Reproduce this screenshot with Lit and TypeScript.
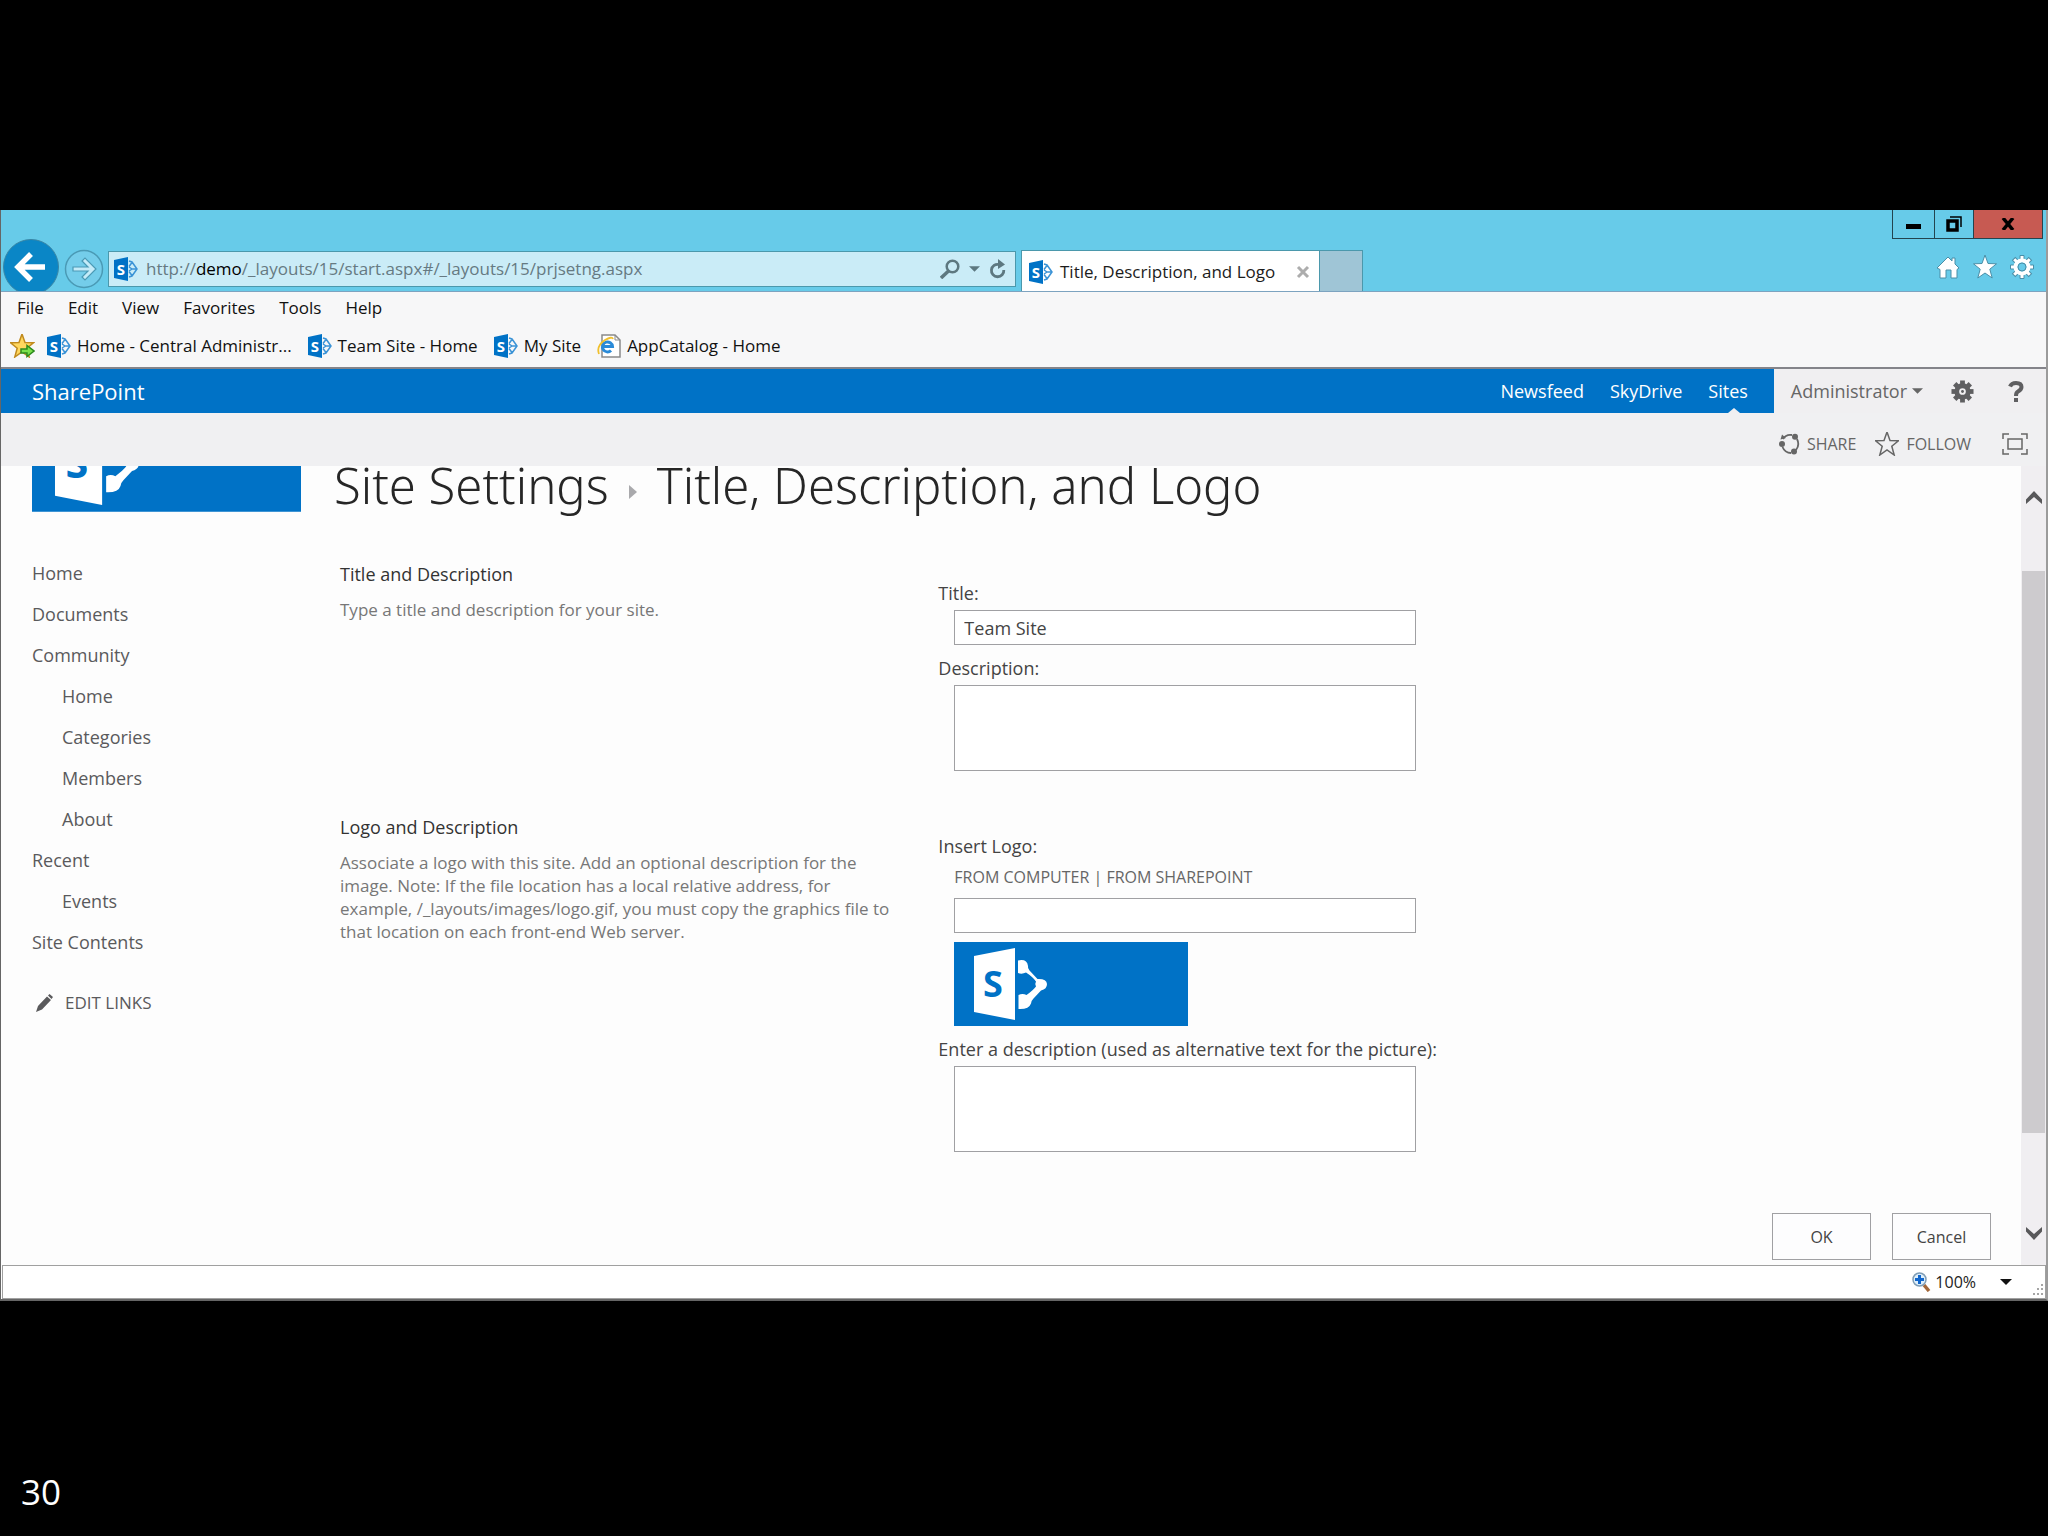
import { LitElement, html, css, svg } from "lit";
import { customElement, state } from "lit/decorators.js";

const siteIcon = html`<svg class="site-icon" viewBox="0 0 24 24" width="24" height="24" aria-hidden="true">
  <path d="M0 3 14 0v24L0 21z" fill="#0072c6" />
  <path d="M15 4l3 1 5 7-5 7-3 1M15 9.500l3-4M15 14.500l3 4M15 10l3 2-3 2M18 12h5" fill="none" stroke="#3b93d6" stroke-width="1.500" />
  <text x="7" y="17.500" text-anchor="middle" class="icon-letter small">S</text>
</svg>`;

const bannerArt = html`<svg class="banner-art" viewBox="0 0 234 84" aria-hidden="true">
  <path d="M0 0h234v84H0z" fill="#0072c6" />
  <path d="M20 14 61 6v72L20 70z" fill="#fff" />
  <path d="M64 18.500q9-2 10 5.500-.5 2.500 1.500 4.500l8 8.500q9-.5 9.500 5 0 5-6 6.500l-7.500 8q-2.500 2.500-2.500 5-2 6-12.500 5.500V53q4-2 8 0 7-5 9.500-8.500-1.500-2.500 0-5Q79 35 72 30.500q-4 2-8 .5z" fill="#fff" />
  <text x="39" y="55" text-anchor="middle" class="icon-letter large">S</text>
</svg>`;

const gearTeeth = (inner: number, outer: number, halfWidth: number) =>
  [0, 45, 90, 135, 180, 225, 270, 315].map(
    (a) => svg`<path d=${`M${12 - halfWidth} ${12 - inner}V${12 - outer}h${halfWidth * 2}V${12 - inner}z`} transform=${`rotate(${a} 12 12)`} />`
  );

const star = "M12 0l3 8.500 8.500.3-6.700 5.400 2.400 8.800-7.200-5-7.200 5 2.400-8.800L.5 8.800 9 8.500z";

interface NavItem {
  label: string;
  child?: boolean;
}

@customElement("app-root")
export class AppRoot extends LitElement {
  @state() private siteTitle = "Team Site";

  private nav: NavItem[] = [
    { label: "Home" },
    { label: "Documents" },
    { label: "Community" },
    { label: "Home", child: true },
    { label: "Categories", child: true },
    { label: "Members", child: true },
    { label: "About", child: true },
    { label: "Recent" },
    { label: "Events", child: true },
    { label: "Site Contents" },
  ];

  static styles = css`
    :host {
      display: flex;
      flex-direction: column;
      box-sizing: border-box;
      min-height: 100vh;
      padding-top: 210px;
      background: #000;
      color: #444;
      font: 18px/24px "Open Sans", "Noto Sans", sans-serif;
    }
    * { box-sizing: border-box; }
    svg { display: block; flex: none; }
    a { color: inherit; text-decoration: none; }
    button { margin: 0; padding: 0; border: 0; background: none; color: inherit; font: inherit; }
    h1, h2, p, ul { margin: 0; padding: 0; font-weight: 400; }
    ul { list-style: none; }
    .icon-letter { font-family: "Open Sans", sans-serif; font-weight: 700; }
    .small { font-size: 15px; fill: #fff; }
    .large { font-size: 36px; fill: #0072c6; }

    .window {
      border: solid #666;
      border-width: 0 2px 2px 1px;
      border-right-color: #9b9b9b;
      background: #fdfdfd;
    }

    .titlebar {
      display: flex;
      align-items: flex-end;
      height: 82px;
      padding: 0 3px 0 2px;
      border-bottom: 1px solid #7da3c0;
      background: #67cbe9;
    }
    .back { height: 52px; width: 56px; overflow: hidden; }
    .forward { width: 40px; height: 52px; margin-left: 5px; padding-top: 7px; }
    .address {
      display: flex;
      align-items: center;
      flex: 0 1 908px;
      height: 36px;
      margin: 0 0 4px 4px;
      padding: 0 8px 0 5px;
      border: 1px solid #4b98ac;
      background: #caecf7;
      color: #667a82;
      font-size: 17px;
    }
    .url { flex: 1; margin-left: 8px; white-space: nowrap; }
    .url b { color: #000; font-weight: 400; }
    .address button + button { margin-left: 9px; }
    .tab {
      display: flex;
      align-items: center;
      width: 299px;
      height: 41px;
      margin-left: 5px;
      padding: 2px 9px 0 7px;
      border: 1px solid #4b98ac;
      border-bottom: 0;
      background: #fff;
      color: #1c1c1c;
      font-size: 17px;
      white-space: nowrap;
    }
    .tab-name { flex: 1; margin-left: 7px; }
    .new-tab { width: 43px; height: 41px; border: 1px solid #4b98ac; border-width: 1px 1px 0 0; background: #9fc5d6; }
    .corner {
      display: flex;
      flex-direction: column;
      align-items: flex-end;
      justify-content: space-between;
      align-self: stretch;
      margin-left: auto;
      padding-bottom: 12px;
    }
    .captions { display: flex; border: 1px solid #23444f; border-top: 0; }
    .captions button { display: grid; place-items: center; width: 41px; height: 28px; }
    .captions button + button { width: 39px; border-left: 1px solid #23444f; }
    .captions button.close { width: 69px; background: #c75a52; }
    .tools { display: flex; gap: 13px; padding-right: 9px; }

    .menus {
      height: 77px;
      padding: 4px 8px 0 9px;
      border-bottom: 2px solid #84848a;
      background: #f7f7f8;
      color: #111;
      font-size: 17px;
    }
    .menubar { display: flex; gap: 24px; padding-left: 7px; }
    .favorites { display: flex; align-items: center; gap: 16px; margin-top: 14px; }
    .favorites button { margin-right: -4px; }
    .favorites a { display: flex; align-items: center; gap: 6px; white-space: nowrap; }

    .suite { display: flex; height: 44px; background: #f0eff1; }
    .suite-blue {
      display: flex;
      flex: 1;
      align-items: center;
      padding: 0 26px 0 31px;
      background: #0072c6;
      color: #fff;
    }
    .brand { margin-right: auto; font-size: 22px; }
    .suite-links { display: flex; align-items: center; align-self: stretch; gap: 26px; }
    .suite-links a { display: flex; align-items: center; align-self: stretch; }
    .current { position: relative; }
    .current::after {
      content: "";
      position: absolute;
      left: 50%;
      bottom: 0;
      border: solid transparent;
      border-width: 0 6px 5px;
      border-bottom-color: #f0eff1;
    }
    .suite-user { display: flex; align-items: center; padding: 0 22px 0 17px; color: #666; }
    .account { display: flex; align-items: center; gap: 5px; }
    .suite-user .gear { margin: 0 34px 0 28px; }

    .actions {
      display: flex;
      justify-content: flex-end;
      align-items: center;
      height: 53px;
      padding: 8px 18px 0 24px;
      background: #f0f0f2;
      color: #666;
      font-size: 16px;
    }
    .actions button { display: flex; align-items: center; gap: 7px; margin-left: 19px; }
    .actions button.focus { margin-left: 31px; }

    .pane { display: flex; }
    .page { display: flex; flex: 1; min-width: 0; padding: 0 30px 5px 31px; }
    .side { flex: none; width: 269px; margin-right: 33px; overflow: hidden; color: #5a5a5c; }
    .side .banner-art { width: 269px; height: 97px; margin-top: -51px; }
    .nav { margin-top: 41px; line-height: 41px; }
    .child { padding-left: 30px; }
    .edit-links { display: flex; align-items: center; gap: 12px; margin-top: 19px; padding-left: 4px; font-size: 17px; line-height: 41px; }

    .main { flex: 1; min-width: 0; }
    h1 {
      display: flex;
      align-items: center;
      gap: 20px;
      color: #262626;
      font: 300 49px/38px "Noto Sans", "Open Sans", sans-serif;
      white-space: nowrap;
    }
    h1 svg { margin-top: 14px; }
    .section { display: grid; grid-template-columns: 598fr 1052fr; padding-left: 6px; }
    .first { margin-top: 58px; }
    .second { margin-top: 44px; }
    h2 { color: #333; font-size: 18px; line-height: 24px; }
    .hint { max-width: 552px; margin-top: 12px; color: #777; font-size: 17px; line-height: 23px; }
    .fields { display: flex; flex-direction: column; align-items: flex-start; padding-top: 19px; }
    .fields label + *, .inset { margin-left: 16px; }
    .fields input, .fields textarea {
      display: block;
      width: 462px;
      max-width: calc(100% - 16px);
      margin-top: 5px;
      border: 1px solid #a0a0a3;
      outline: 0;
      border-radius: 0;
      background: #fff;
      color: #444;
      font: inherit;
      resize: none;
    }
    .fields input { height: 35px; padding: 0 9px; }
    .fields textarea { height: 86px; padding: 4px 9px; }
    .fields * + label { margin-top: 11px; }
    .sources { margin-top: 7px; color: #666; font-size: 16px; }
    .fields input.path { margin: 9px 0 9px 16px; }
    .fields .banner-art { width: 234px; height: 84px; margin-left: 16px; }
    .buttons { display: flex; justify-content: flex-end; gap: 21px; margin-top: 61px; }
    .buttons button { width: 99px; height: 47px; border: 1px solid #a0a0a3; background: #fdfdfe; color: #444; font-size: 16px; }

    .scroll {
      display: flex;
      flex-direction: column;
      align-items: center;
      flex: none;
      width: 25px;
      padding: 25px 0;
      background: #f0eef1;
    }
    .thumb { width: 23px; flex: 0 1 562px; margin: 67px 0 auto; background: #cdcbce; }

    .status {
      display: flex;
      align-items: center;
      justify-content: flex-end;
      height: 34px;
      margin-left: 1px;
      border: 1px solid #a0a0a0;
      background: #fff;
      color: #222;
      font-size: 16px;
    }
    .zoom { display: flex; align-items: center; gap: 4px; }
    .zoom .caret { margin-left: 20px; }
    .grip { align-self: flex-end; margin: 0 1px 2px 20px; }
    .number { margin-top: 167px; padding-left: 21px; color: #fff; font: 35px/48px "Open Sans", sans-serif; }
  `;

  private caret(width: number, color: string) {
    return html`<svg class="caret" width=${width} height="6" viewBox="0 0 12 6" aria-hidden="true"><path d="M0 0h12L6 6z" fill=${color} /></svg>`;
  }

  private titleBar() {
    return html`<header class="titlebar">
      <button class="back" aria-label="Back">
        <svg width="56" height="56" viewBox="0 0 56 56">
          <circle cx="28" cy="28" r="27.500" fill="#0a86c6" stroke="#3a86a5" />
          <path d="M42 28H16M28 15 15 28l13 13" fill="none" stroke="#fff" stroke-width="5.500" />
        </svg>
      </button>
      <button class="forward" aria-label="Forward">
        <svg width="40" height="40" viewBox="0 0 40 40">
          <circle cx="20" cy="20" r="18.500" fill="#74cdea" stroke="#4a9ab5" stroke-width="1.500" />
          <path d="M9 18h15l-6-6 3-3 11 11-11 11-3-3 6-6H9z" fill="#c4ebf8" stroke="#4a9ab5" stroke-width="1.200" />
        </svg>
      </button>
      <div class="address">
        ${siteIcon}
        <span class="url">http://<b>demo</b>/_layouts/15/start.aspx#/_layouts/15/prjsetng.aspx</span>
        <button aria-label="Search">
          <svg width="20" height="20" viewBox="0 0 20 20" fill="none" stroke="#5d7880"><circle cx="12.500" cy="7.500" r="5.800" stroke-width="2.500" /><path d="M8.500 12 1 19" stroke-width="3.500" /></svg>
        </button>
        <button aria-label="Search options">${this.caret(11, "#5d7880")}</button>
        <button aria-label="Refresh">
          <svg width="18" height="20" viewBox="0 0 18 20"><path d="M10 5.500A6.200 6.200 0 1 0 14.800 11" fill="none" stroke="#5d7880" stroke-width="2.800" /><path d="M9 0l7 5.500L9 10z" fill="#5d7880" /></svg>
        </button>
      </div>
      <div class="tab">
        ${siteIcon}
        <span class="tab-name">Title, Description, and Logo</span>
        <button aria-label="Close tab">
          <svg width="14" height="14" viewBox="0 0 14 14"><path d="M2 2l10 10M12 2 2 12" stroke="#adadad" stroke-width="3" /></svg>
        </button>
      </div>
      <button class="new-tab" aria-label="New tab"></button>
      <div class="corner">
        <div class="captions">
          <button aria-label="Minimize"><svg width="16" height="10" viewBox="0 0 16 10"><path d="M0 5h15v5H0z" /></svg></button>
          <button aria-label="Restore">
            <svg width="16" height="16" viewBox="0 0 16 16" fill="none" stroke="#000"><path d="M4 1h11v10" stroke-width="1.500" /><path d="M2 5h9v9H2z" stroke-width="3.500" /></svg>
          </button>
          <button class="close" aria-label="Close"><svg width="14" height="12" viewBox="0 0 14 12"><path d="M2 0l10 12M12 0 2 12" stroke="#000" stroke-width="3.500" /></svg></button>
        </div>
        <div class="tools">
          <button aria-label="Home">
            <svg width="24" height="24" viewBox="0 0 24 24"><path d="M1 13 12 2l4 4V3h3v6l4 4-2 1.500V23h-6v-8h-5v8H4v-8.500z" fill="#fff" stroke="#4a8fa8" /></svg>
          </button>
          <button aria-label="Favorites"><svg width="24" height="24" viewBox="0 0 24 24"><path d=${star} fill="#fff" stroke="#4a8fa8" /></svg></button>
          <button aria-label="Tools">
            <svg width="24" height="24" viewBox="0 0 24 24">
              <g fill="#fff" stroke="#4a8fa8">${gearTeeth(6, 11.5, 2)}</g>
              <circle cx="12" cy="12" r="6.500" fill="#67cbe9" stroke="#fff" stroke-width="4" />
              <circle cx="12" cy="12" r="4" fill="none" stroke="#4a8fa8" />
            </svg>
          </button>
        </div>
      </div>
    </header>`;
  }

  private menus() {
    return html`<div class="menus">
      <nav class="menubar" aria-label="Menu">
        ${["File", "Edit", "View", "Favorites", "Tools", "Help"].map((m) => html`<button>${m}</button>`)}
      </nav>
      <nav class="favorites" aria-label="Favorites bar">
        <button aria-label="Add to favorites">
          <svg width="25" height="24" viewBox="0 0 25 24">
            <path d=${star} fill="#ffd75e" stroke="#c08a1e" stroke-width="1.500" />
            <path d="M11 15h6v-3.500l7 5.500-7 5.500V19h-6z" fill="#7be04b" stroke="#2c8a1d" stroke-width="1.500" />
          </svg>
        </button>
        ${["Home - Central Administr...", "Team Site - Home", "My Site"].map((f) => html`<a href="#">${siteIcon}${f}</a>`)}
        <a href="#">
          <svg width="24" height="24" viewBox="0 0 24 24" aria-hidden="true">
            <path d="M5 1h13l5 5v17H5z" fill="#fff" stroke="#8a8a8a" stroke-width="1.500" />
            <path d="M18 1v5h5" fill="none" stroke="#8a8a8a" />
            <path d="M6 12.500h9.500a5 5 0 1 0-1.500 4" fill="none" stroke="#2a8ad8" stroke-width="3" />
            <path d="M2 20Q-1 12 8 6q7-4 8-1" fill="none" stroke="#f0c02e" stroke-width="1.800" />
          </svg>
          AppCatalog - Home
        </a>
      </nav>
    </div>`;
  }

  private suiteBar() {
    return html`<div class="suite">
        <div class="suite-blue">
          <a class="brand" href="#">SharePoint</a>
          <nav class="suite-links" aria-label="Suite links">
            <a href="#">Newsfeed</a><a href="#">SkyDrive</a><a class="current" href="#">Sites</a>
          </nav>
        </div>
        <div class="suite-user">
          <button class="account">Administrator ${this.caret(11, "#666")}</button>
          <button class="gear" aria-label="Settings">
            <svg width="23" height="23" viewBox="0 0 24 24">
              <g fill="#5f5f61">${gearTeeth(6, 11.5, 2.5)}</g>
              <circle cx="12" cy="12" r="6" fill="none" stroke="#5f5f61" stroke-width="5" />
              <circle cx="12" cy="12" r="1.500" fill="#5f5f61" />
            </svg>
          </button>
          <button aria-label="Help">
            <svg width="16" height="21" viewBox="0 0 16 21"><path d="M2 5.500Q3.500 2 8 2q5.500 0 5.500 4Q13.500 8.500 10 10.500 8 11.500 8 15" fill="none" stroke="#5f5f61" stroke-width="4" /><path d="M6 17h4v4H6z" fill="#5f5f61" /></svg>
          </button>
        </div>
      </div>
      <div class="actions">
        <button>
          <svg width="21" height="22" viewBox="0 0 21 22" aria-hidden="true">
            <path d="M4 6q3-5 9-4M18 6q3 6-1 11M12 20q-6 0-8.500-6" fill="none" stroke="#666" stroke-width="1.800" />
            <path d="M1.500 6.500 3 1.500 7 5z" fill="#666" />
            <circle cx="16" cy="3.800" r="3" fill="#666" /><circle cx="3" cy="11" r="3" fill="#666" /><circle cx="15" cy="18.500" r="3" fill="#666" />
          </svg>
          SHARE
        </button>
        <button>
          <svg width="24" height="24" viewBox="0 0 24 24" aria-hidden="true"><path d=${star} fill="none" stroke="#666" stroke-width="1.500" /></svg>
          FOLLOW
        </button>
        <button class="focus" aria-label="Focus on content">
          <svg width="26" height="22" viewBox="0 0 26 22" fill="none" stroke="#666" stroke-width="1.500"><path d="M1 6V1h6M19 1h6v5M25 16v5h-6M7 21H1v-5M6 6h14v10H6z" /></svg>
        </button>
      </div>`;
  }

  private side() {
    return html`<aside class="side">
      ${bannerArt}
      <ul class="nav">
        ${this.nav.map((n) => html`<li class=${n.child ? "child" : ""}><a href="#">${n.label}</a></li>`)}
      </ul>
      <button class="edit-links">
        <svg width="17" height="18" viewBox="0 0 17 18" aria-hidden="true"><path d="M0 18l2-6L11 2.500 15 6 6 15.500zM12 1.500 13.500 0 17 3l-1.500 2z" fill="#5a5a5c" /></svg>
        EDIT LINKS
      </button>
    </aside>`;
  }

  private form() {
    return html`<main class="main">
      <h1>
        Site Settings
        <svg width="8" height="14" viewBox="0 0 8 14" aria-hidden="true"><path d="M0 0l8 7-8 7z" fill="#a9a9ac" /></svg>
        Title, Description, and Logo
      </h1>
      <section class="section first">
        <div>
          <h2>Title and Description</h2>
          <p class="hint">Type a title and description for your site.</p>
        </div>
        <div class="fields">
          <label for="title">Title:</label>
          <input id="title" type="text" .value=${this.siteTitle} @input=${(e: Event) => (this.siteTitle = (e.target as HTMLInputElement).value)} />
          <label for="description">Description:</label>
          <textarea id="description"></textarea>
        </div>
      </section>
      <section class="section second">
        <div>
          <h2>Logo and Description</h2>
          <p class="hint">
            Associate a logo with this site. Add an optional description for the image. Note: If the file location has a
            local relative address, for example, /_layouts/images/logo.gif, you must copy the graphics file to that
            location on each front-end Web server.
          </p>
        </div>
        <div class="fields">
          <label for="logo">Insert Logo:</label>
          <div class="sources inset"><a href="#">FROM COMPUTER</a> | <a href="#">FROM SHAREPOINT</a></div>
          <input id="logo" class="path" type="text" />
          ${bannerArt}
          <label for="alt">Enter a description (used as alternative text for the picture):</label>
          <textarea id="alt"></textarea>
        </div>
      </section>
      <div class="buttons"><button>OK</button><button>Cancel</button></div>
    </main>`;
  }

  render() {
    return html`<div class="window">
        ${this.titleBar()} ${this.menus()} ${this.suiteBar()}
        <div class="pane">
          <div class="page">${this.side()} ${this.form()}</div>
          <div class="scroll">
            <svg width="16" height="13" viewBox="0 0 16 13" aria-hidden="true"><path d="M0 8.500 8 0l8 8.500V13L8 6 0 13z" fill="#58585a" /></svg>
            <div class="thumb"></div>
            <svg width="16" height="13" viewBox="0 0 16 13" aria-hidden="true"><path d="M0 4.500 8 13l8-8.500V0L8 7 0 0z" fill="#58585a" /></svg>
          </div>
        </div>
        <footer class="status">
          <button class="zoom">
            <svg width="19" height="20" viewBox="0 0 19 20" aria-hidden="true">
              <path d="M12 13l5 6" stroke="#a4683a" stroke-width="3.500" />
              <circle cx="7.500" cy="7.500" r="6.500" fill="#dceefb" stroke="#7f9db5" stroke-width="1.500" />
              <path d="M7.500 3v9M3 7.500h9" stroke="#1166cc" stroke-width="3" />
            </svg>
            100% ${this.caret(12, "#111")}
          </button>
          <svg class="grip" width="12" height="12" viewBox="0 0 12 12" fill="#a5a5a5" aria-hidden="true">
            <path d="M9 0h2v2H9zM9 4h2v2H9zM5 4h2v2H5zM9 9h2v2H9zM5 9h2v2H5zM1 9h2v2H1z" />
          </svg>
        </footer>
      </div>
      <div class="number">30</div>`;
  }
}
